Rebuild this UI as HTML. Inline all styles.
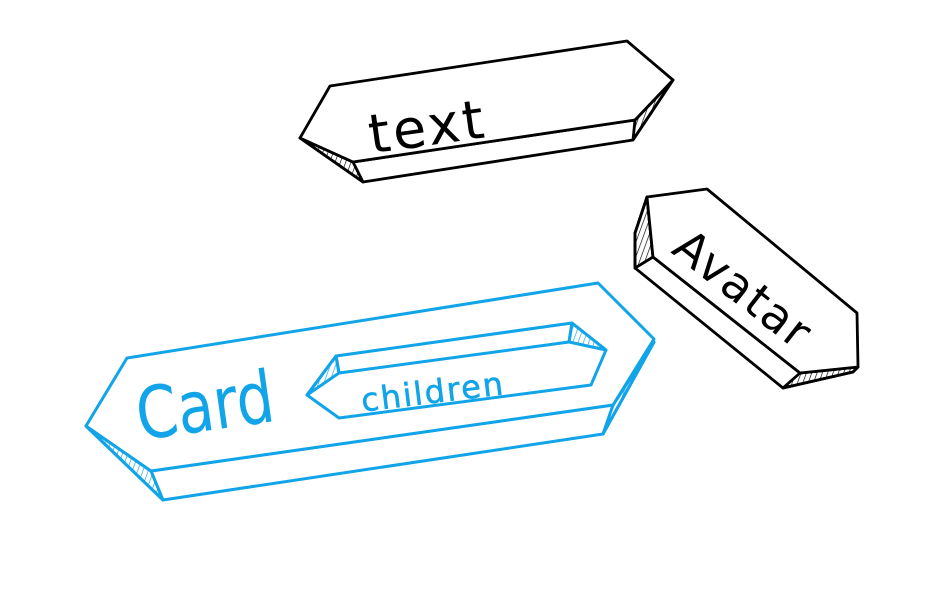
<!DOCTYPE html>
<html><head><meta charset="utf-8"><style>
html,body{margin:0;padding:0;background:#fff;width:941px;height:590px;overflow:hidden}
svg{display:block}
text{font-family:"DejaVu Sans","Liberation Sans",sans-serif}
</style></head><body>
<svg width="941" height="590" viewBox="0 0 941 590" xmlns="http://www.w3.org/2000/svg">
<defs>
<pattern id="hk" width="5" height="5" patternUnits="userSpaceOnUse" patternTransform="rotate(20)"><line x1="0" y1="0" x2="0" y2="5" stroke="#000" stroke-width="1.3"/></pattern>
<pattern id="hb" width="5" height="5" patternUnits="userSpaceOnUse" patternTransform="rotate(20)"><line x1="0" y1="0" x2="0" y2="5" stroke="#12a4e8" stroke-width="1.3"/></pattern>
</defs>

<g stroke="#000" stroke-width="2.8" stroke-linejoin="round" fill="#fff">
<polygon points="300,138 363,182 633,140 673,80 635,120 353,162" fill="#fff"/>
<polygon points="300,138 353,162 363,182" fill="url(#hk)"/>
<polygon points="635,120 673,80 633,140" fill="url(#hk)"/>
<polygon points="330,86 627,41 673,80 635,120 353,162 300,138"/>
</g>
<text x="368" y="145" font-size="54" letter-spacing="3" transform="rotate(-8 430 125)" fill="#000">text</text>

<g stroke="#000" stroke-width="2.8" stroke-linejoin="round" fill="#fff">
<polygon points="647,197 635,233 635,268 783,388 853,372 858,367 800,373 653,257"/>
<polygon points="647,197 635,233 635,268 653,257" fill="url(#hk)"/>
<polygon points="800,373 858,367 853,372 783,388" fill="url(#hk)"/>
<polygon points="647,197 707,189 857,313 858,367 800,373 653,257"/>
</g>
<text x="0" y="0" font-size="46" letter-spacing="2" transform="translate(670,252) rotate(38)" fill="#000">Avatar</text>

<g stroke="#12a4e8" stroke-width="3" stroke-linejoin="round" fill="#fff">
<polygon points="86,426 163,500 603,434 654,342 613,405 151,471"/>
<polygon points="86,426 151,471 163,500" fill="url(#hb)"/>
<polygon points="613,405 654,342 603,434" fill="url(#hb)"/>
<polygon points="86,426 127,358 598,283 654,339 613,405 151,471"/>
<polygon points="307,395 336,356 572,323 606,350 591,385 339,418"/>
<polygon points="307,395 336,356 339,373" fill="url(#hb)"/>
<polygon points="572,323 606,350 569,342" fill="url(#hb)"/>
<polyline points="336,356 339,373 569,342 572,323" fill="none"/>
<polyline points="339,373 307,395" fill="none" stroke-width="1.5"/>
<polyline points="569,342 606,350" fill="none" stroke-width="1.5"/>
</g>
<g transform="translate(140,440) rotate(-8) scale(0.82,1)">
<text x="0" y="0" font-size="72" fill="#12a4e8">Card</text>
</g>
<text x="360" y="402" font-size="32" letter-spacing="2" transform="rotate(-7 440 385)" fill="#12a4e8" stroke="#12a4e8" stroke-width="0.6">children</text>
</svg>
</body></html>
